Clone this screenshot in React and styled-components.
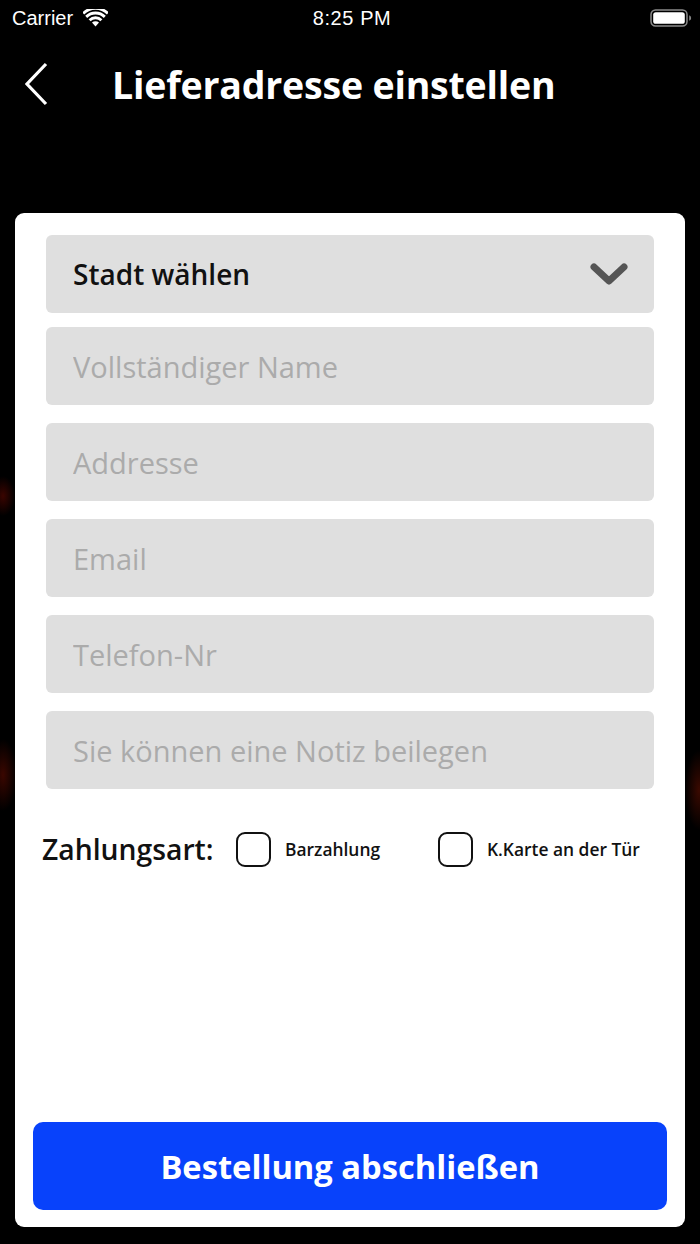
import React, { useState } from "react";
import styled, { createGlobalStyle } from "styled-components";

const GlobalStyle = createGlobalStyle`
  html, body {
    margin: 0;
    padding: 0;
    background: #000;
  }
  body {
    font-family: "Open Sans", "Noto Sans", sans-serif;
  }
`;

const fields = [
  "Vollständiger Name",
  "Addresse",
  "Email",
  "Telefon-Nr",
  "Sie können eine Notiz beilegen",
];

const WifiIcon = () => (
  <svg width="25" height="18" viewBox="0 0 25 18">
    <path d="M12.5 17.5 L9 13.6 a5 5 0 0 1 7 0 Z" fill="#fff" />
    <path d="M5.6 10.2 a9.8 9.8 0 0 1 13.8 0 l-2 2.1 a7 7 0 0 0 -9.8 0 Z" fill="#fff" />
    <path d="M2.2 6.8 a14.6 14.6 0 0 1 20.6 0 l-2 2.1 a11.8 11.8 0 0 0 -16.6 0 Z" fill="#fff" />
    <path d="M-1.1 3.4 a19.4 19.4 0 0 1 27.2 0 l-2 2.1 a16.6 16.6 0 0 0 -23.2 0 Z" fill="#fff" transform="translate(0.3 0) scale(0.98 1)" />
  </svg>
);

const BatteryIcon = () => (
  <svg width="42" height="18" viewBox="0 0 42 18">
    <rect x="1" y="1" width="36" height="16" rx="4.5" fill="none" stroke="#8a8a8a" strokeWidth="1.5" />
    <rect x="3.2" y="3.2" width="31.6" height="11.6" rx="2.6" fill="#fff" />
    <path d="M39.2 6.2 a3 3 0 0 1 0 5.6 Z" fill="#8a8a8a" />
  </svg>
);

const BackIcon = () => (
  <svg width="24" height="44" viewBox="0 0 24 44">
    <polyline points="21,2 2,22 21,42" fill="none" stroke="#fff" strokeWidth="3.2" strokeLinejoin="miter" />
  </svg>
);

const ChevronDown = () => (
  <svg width="40" height="24" viewBox="0 0 40 24">
    <polyline points="5,5 20,19 35,5" fill="none" stroke="#555" strokeWidth="7" strokeLinecap="round" strokeLinejoin="round" />
  </svg>
);

export default function App() {
  const [payment, setPayment] = useState(null);
  const [values, setValues] = useState(fields.map(() => ""));

  const update = (i, v) => setValues((prev) => prev.map((x, j) => (j === i ? v : x)));

  return (
    <Page>
      <GlobalStyle />
      <StatusBar>
        <Carrier>
          Carrier
          <WifiIcon />
        </Carrier>
        <Clock>8:25 PM</Clock>
        <Battery>
          <BatteryIcon />
        </Battery>
      </StatusBar>
      <NavBar>
        <BackButton>
          <BackIcon />
        </BackButton>
        <Title>Lieferadresse einstellen</Title>
      </NavBar>
      <Card>
        <Fields>
          <Select>
            <SelectText>Stadt wählen</SelectText>
            <ChevronDown />
          </Select>
          {fields.map((f, i) => (
            <Field
              key={f}
              placeholder={f}
              value={values[i]}
              onChange={(e) => update(i, e.target.value)}
            />
          ))}
        </Fields>
        <PaymentRow>
          <PaymentLabel>Zahlungsart:</PaymentLabel>
          <Option onClick={() => setPayment("cash")} $width="202px">
            <Box $checked={payment === "cash"} />
            <OptionText>Barzahlung</OptionText>
          </Option>
          <Option onClick={() => setPayment("card")}>
            <Box $checked={payment === "card"} />
            <OptionText>K.Karte an der Tür</OptionText>
          </Option>
        </PaymentRow>
        <Spacer />
        <SubmitButton>Bestellung abschließen</SubmitButton>
      </Card>
    </Page>
  );
}

const Page = styled.div`
  min-height: 1244px;
  display: flex;
  flex-direction: column;
  background:
    radial-gradient(ellipse 12px 20px at 3px 496px, rgba(130, 10, 0, 0.45), transparent),
    radial-gradient(ellipse 14px 36px at 3px 775px, rgba(130, 15, 0, 0.45), transparent),
    radial-gradient(ellipse 14px 40px at 699px 790px, rgba(130, 20, 0, 0.45), transparent),
    #000;
`;

const StatusBar = styled.div`
  height: 36px;
  display: flex;
  align-items: center;
  justify-content: space-between;
  padding: 0 8px 0 12px;
  font-family: "Liberation Sans", Arial, sans-serif;
  font-size: 20px;
  color: #fff;
`;

const Carrier = styled.div`
  display: flex;
  align-items: center;
  gap: 10px;
  width: 160px;
`;

const Clock = styled.div`
  font-weight: 500;
  letter-spacing: 0.6px;
`;

const Battery = styled.div`
  width: 160px;
  display: flex;
  justify-content: flex-end;
`;

const NavBar = styled.div`
  height: 98px;
  display: flex;
  align-items: center;
  padding-left: 25px;
  padding-bottom: 2px;
  box-sizing: border-box;
`;

const BackButton = styled.button`
  background: none;
  border: none;
  padding: 0;
  margin-right: 63px;
  display: flex;
  cursor: pointer;
`;

const Title = styled.h1`
  margin: 0;
  color: #fff;
  font-size: 37.5px;
  font-weight: 700;
  letter-spacing: -0.2px;
`;

const Card = styled.div`
  margin: 79px 15px 17px;
  height: 1014px;
  box-sizing: border-box;
  background: #fff;
  border-radius: 9px;
  padding: 22px 18px 17px;
  display: flex;
  flex-direction: column;
`;

const Fields = styled.div`
  padding: 0 13px;
  display: flex;
  flex-direction: column;
  gap: 18px;
`;

const Select = styled.div`
  height: 78px;
  background: #dfdfdf;
  border-radius: 6px;
  display: flex;
  align-items: center;
  justify-content: space-between;
  padding: 0 25px 0 27px;
  box-sizing: border-box;
  margin-bottom: -4px;
  cursor: pointer;
`;

const SelectText = styled.span`
  font-size: 28px;
  font-weight: 600;
  color: #111;
`;

const Field = styled.input`
  height: 78px;
  background: #dfdfdf;
  border: none;
  border-radius: 6px;
  padding: 0 27px;
  box-sizing: border-box;
  font-family: "Open Sans", sans-serif;
  font-size: 29px;
  font-weight: 500;
  color: #222;
  outline: none;
  &::placeholder {
    color: #ababab;
  }
`;

const PaymentRow = styled.div`
  margin-top: 41px;
  padding-left: 9px;
  display: flex;
  align-items: center;
`;

const PaymentLabel = styled.span`
  font-size: 28.3px;
  font-weight: 600;
  color: #111;
  width: 194px;
`;

const Option = styled.label`
  display: flex;
  align-items: center;
  gap: 14px;
  width: ${(p) => p.$width || "auto"};
  cursor: pointer;
`;

const Box = styled.span`
  width: 35px;
  height: 35px;
  box-sizing: border-box;
  border: 2px solid #111;
  border-radius: 9px;
  background: ${(p) => (p.$checked ? "#111" : "#fff")};
`;

const OptionText = styled.span`
  font-size: 17.4px;
  font-weight: 600;
  color: #111;
`;

const Spacer = styled.div`
  flex: 1;
`;

const SubmitButton = styled.button`
  height: 88px;
  border: none;
  border-radius: 10px;
  background: #0842fb;
  color: #fff;
  font-family: "Open Sans", sans-serif;
  font-size: 32.7px;
  font-weight: 700;
  cursor: pointer;
`;
